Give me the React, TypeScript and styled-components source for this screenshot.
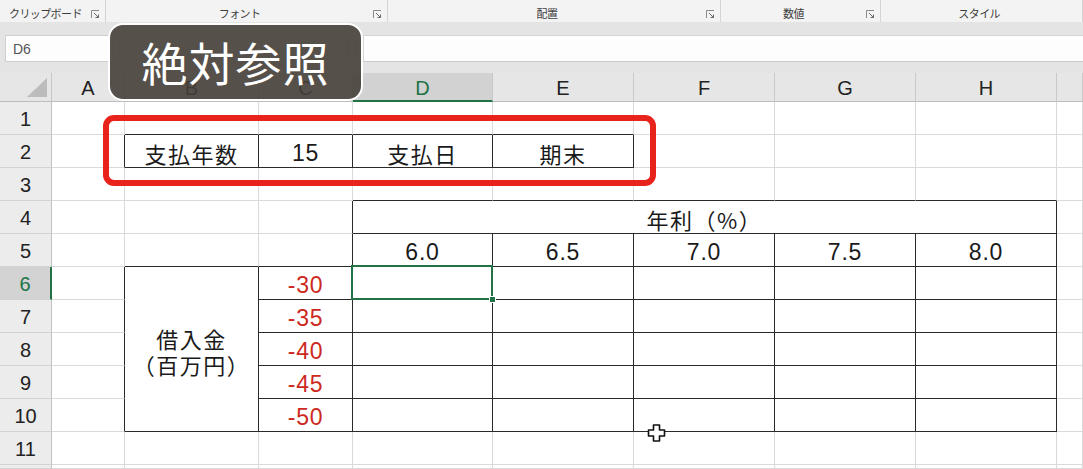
import React from 'react';
import styled, { createGlobalStyle, css } from 'styled-components';

const JP = `"Noto Sans CJK JP", "Noto Sans", sans-serif`;
const NUM = `"Liberation Sans", Arial, sans-serif`;
const GREEN = '#217346';

const GlobalStyle = createGlobalStyle`
  html, body { margin: 0; padding: 0; background: #fff; overflow: hidden; }
  #root { width: 1083px; height: 469px; }
`;

const Screen = styled.div`
  position: relative;
  width: 1083px;
  height: 469px;
  overflow: hidden;
  display: flex;
  flex-direction: column;
  background: #fff;
`;

/* ---------- Ribbon group labels ---------- */
const Ribbon = styled.div`
  display: flex;
  height: 22px;
  flex-shrink: 0;
  background: #f3f3f3;
`;

const Group = styled.div<{ $w?: number }>`
  display: flex;
  align-items: center;
  box-sizing: border-box;
  ${(p) => (p.$w ? `width: ${p.$w}px;` : 'flex: 1;')}
  border-right: 1px solid #d4d4d4;
  padding-right: 5px;
`;

const GroupLabel = styled.span`
  flex: 1;
  text-align: center;
  font-family: ${JP};
  font-size: 11px;
  letter-spacing: -0.6px;
  color: #3c3c3c;
  padding-top: 4px;
`;

const LauncherIcon = styled.svg`
  width: 9px;
  height: 9px;
  margin-top: 6px;
  flex-shrink: 0;
`;

const Launcher = () => (
  <LauncherIcon viewBox="0 0 9 9">
    <path d="M0.5 8V0.5H8" fill="none" stroke="#8a8a8a" strokeWidth="1" />
    <path d="M3 3L7.5 7.5M4.5 7.5H7.5V4.5" fill="none" stroke="#6a6a6a" strokeWidth="1" />
  </LauncherIcon>
);

const Band = styled.div<{ $h: number }>`
  height: ${(p) => p.$h}px;
  flex-shrink: 0;
  background: #e4e4e4;
`;

/* ---------- Formula bar ---------- */
const FormulaRow = styled.div`
  display: flex;
  height: 27px;
  flex-shrink: 0;
  background: #e4e4e4;
`;

const NameBox = styled.div`
  width: 108px;
  margin-left: 5px;
  box-sizing: border-box;
  background: #fdfdfd;
  border: 1px solid #cfcfcf;
  font-family: ${NUM};
  font-size: 14px;
  color: #555;
  display: flex;
  align-items: center;
  padding-left: 7px;
`;

const FxArea = styled.div`
  width: 250px;
  display: flex;
  align-items: center;
  justify-content: flex-end;
  gap: 8px;
  padding-right: 6px;
  box-sizing: border-box;
`;

const FxDivider = styled.span`
  width: 1px;
  height: 18px;
  background: #c4c4c4;
`;

const FormulaInput = styled.div`
  flex: 1;
  background: #fdfdfd;
  border-top: 1px solid #d6d6d6;
  border-bottom: 1px solid #c9c9c9;
  border-left: 1px solid #d6d6d6;
`;

/* ---------- Sheet grid ---------- */
const Sheet = styled.div`
  flex: 1;
  display: grid;
  grid-template-columns: 52px 73px 134px 94px 140px 141px 141px 141px 141px 1fr;
  grid-template-rows: 29px repeat(11, 33px) 1fr;
  background: #fff;
`;

const Corner = styled.div`
  grid-row: 1;
  grid-column: 1;
  background: #e6e6e6;
  border-right: 1px solid #c6c6c6;
  border-bottom: 1px solid #bdbdbd;
  display: flex;
  align-items: flex-end;
  justify-content: flex-end;
  padding: 0 4px 4px 0;
`;

const CornerTri = styled.svg`
  width: 20px;
  height: 19px;
`;

const ColHead = styled.div<{ $c: number; $active?: boolean }>`
  grid-row: 1;
  grid-column: ${(p) => p.$c + 1};
  background: #e6e6e6;
  border-right: 1px solid #c9c9c9;
  border-bottom: 1px solid #bdbdbd;
  display: flex;
  align-items: center;
  justify-content: center;
  font-family: ${NUM};
  font-size: 20px;
  color: #222;
  padding-top: 3px;
  box-sizing: border-box;
  ${(p) =>
    p.$active &&
    css`
      background: #d2d2d2;
      color: ${GREEN};
      border-bottom: 2px solid ${GREEN};
    `}
`;

const RowHead = styled.div<{ $r: number; $active?: boolean }>`
  grid-column: 1;
  grid-row: ${(p) => p.$r + 1};
  background: #ececec;
  border-right: 1px solid #c2c2c2;
  border-bottom: 1px solid #d2d2d2;
  display: flex;
  align-items: center;
  justify-content: center;
  font-family: ${NUM};
  font-size: 20px;
  color: #222;
  padding-top: 2px;
  box-sizing: border-box;
  ${(p) =>
    p.$active &&
    css`
      background: #d3d3d3;
      color: ${GREEN};
      border-right: 2px solid ${GREEN};
    `}
`;

type Kind = 'jp' | 'num' | 'red';

const Cell = styled.div<{
  $r: number;
  $c: number;
  $rs: number;
  $cs: number;
  $darkR: boolean;
  $darkB: boolean;
  $kind?: Kind;
  $selected?: boolean;
}>`
  position: relative;
  grid-row: ${(p) => p.$r + 1} / span ${(p) => p.$rs};
  grid-column: ${(p) => p.$c + 1} / span ${(p) => p.$cs};
  box-sizing: border-box;
  border-right: 1px solid ${(p) => (p.$darkR ? '#2a2a2a' : '#dadada')};
  border-bottom: 1px solid ${(p) => (p.$darkB ? '#2a2a2a' : '#dadada')};
  display: flex;
  flex-direction: column;
  align-items: center;
  justify-content: center;
  padding-top: 3px;
  white-space: pre;
  text-align: center;
  color: #1a1a1a;
  font-family: ${(p) => (p.$kind === 'jp' ? JP : NUM)};
  font-size: ${(p) => (p.$kind === 'jp' ? '22px' : '23px')};
  letter-spacing: ${(p) => (p.$kind === 'jp' ? '1.5px' : '0.8px')};
  line-height: ${(p) => (p.$kind === 'jp' ? '26px' : '24px')};
  ${(p) => p.$kind === 'red' && css`color: #cc2a1e;`}
  ${(p) =>
    p.$selected &&
    css`
      z-index: 2;
      &::before {
        content: '';
        position: absolute;
        left: -2px;
        top: -2px;
        right: -1px;
        bottom: -1px;
        border: 2px solid ${GREEN};
      }
      &::after {
        content: '';
        position: absolute;
        right: -4px;
        bottom: -4px;
        width: 5px;
        height: 5px;
        background: ${GREEN};
        border: 1px solid #fff;
      }
    `}
`;

/* ---------- Overlays ---------- */
const TitleBadge = styled.div`
  position: absolute;
  left: 108px;
  top: 23px;
  width: 255px;
  height: 78px;
  box-sizing: border-box;
  border: 2px solid #fff;
  border-radius: 15px;
  background: rgba(70, 63, 57, 0.9);
  color: #fff;
  font-family: ${JP};
  font-size: 46px;
  letter-spacing: 1px;
  display: flex;
  align-items: center;
  justify-content: center;
  padding-bottom: 2px;
  z-index: 5;
`;

const Highlight = styled.div`
  position: absolute;
  left: 103px;
  top: 115px;
  width: 553px;
  height: 71px;
  box-sizing: border-box;
  border: 6px solid #e8231b;
  border-radius: 11px;
  z-index: 4;
`;

const Pointer = styled.svg`
  position: absolute;
  left: 647px;
  top: 424px;
  width: 19px;
  height: 18px;
  z-index: 6;
`;

/* ---------- Data ---------- */
const COLS = ['A', 'B', 'C', 'D', 'E', 'F', 'G', 'H', ''];
const ROWS = 12;

type Merge = { r: number; c: number; rs: number; cs: number };
const merges: Merge[] = [
  { r: 6, c: 2, rs: 5, cs: 1 },
  { r: 4, c: 4, rs: 1, cs: 5 },
];

const regions = [
  { r1: 2, r2: 2, c1: 2, c2: 5 },
  { r1: 4, r2: 5, c1: 4, c2: 8 },
  { r1: 6, r2: 10, c1: 2, c2: 8 },
];

const inRegion = (r: number, c: number) =>
  regions.some((g) => r >= g.r1 && r <= g.r2 && c >= g.c1 && c <= g.c2);

const values: Record<string, { text: string; kind: Kind }> = {
  '2,2': { text: '支払年数', kind: 'jp' },
  '2,3': { text: '15', kind: 'num' },
  '2,4': { text: '支払日', kind: 'jp' },
  '2,5': { text: '期末', kind: 'jp' },
  '4,4': { text: '年利（%）', kind: 'jp' },
  '5,4': { text: '6.0', kind: 'num' },
  '5,5': { text: '6.5', kind: 'num' },
  '5,6': { text: '7.0', kind: 'num' },
  '5,7': { text: '7.5', kind: 'num' },
  '5,8': { text: '8.0', kind: 'num' },
  '6,2': { text: '借入金\n（百万円）', kind: 'jp' },
  '6,3': { text: '-30', kind: 'red' },
  '7,3': { text: '-35', kind: 'red' },
  '8,3': { text: '-40', kind: 'red' },
  '9,3': { text: '-45', kind: 'red' },
  '10,3': { text: '-50', kind: 'red' },
};

const covered = (r: number, c: number) =>
  merges.some(
    (m) =>
      r >= m.r && r < m.r + m.rs && c >= m.c && c < m.c + m.cs && !(r === m.r && c === m.c)
  );

const buildCells = () => {
  const out: React.ReactNode[] = [];
  for (let r = 1; r <= ROWS; r++) {
    for (let c = 1; c <= COLS.length; c++) {
      if (covered(r, c)) continue;
      const m = merges.find((x) => x.r === r && x.c === c);
      const rs = m ? m.rs : 1;
      const cs = m ? m.cs : 1;
      const lastC = c + cs - 1;
      const lastR = r + rs - 1;
      const darkR = inRegion(r, lastC) || inRegion(r, lastC + 1);
      const darkB = inRegion(lastR, c) || inRegion(lastR + 1, c);
      const v = values[`${r},${c}`];
      out.push(
        <Cell
          key={`${r}-${c}`}
          $r={r}
          $c={c}
          $rs={rs}
          $cs={cs}
          $darkR={darkR}
          $darkB={darkB}
          $kind={v?.kind}
          $selected={r === 6 && c === 4}
        >
          {v?.text}
        </Cell>
      );
    }
  }
  return out;
};

const groups: { label: string; w?: number; launcher: boolean }[] = [
  { label: 'クリップボード', w: 106, launcher: true },
  { label: 'フォント', w: 283, launcher: true },
  { label: '配置', w: 333, launcher: true },
  { label: '数値', w: 161, launcher: true },
  { label: 'スタイル', w: 202, launcher: false },
];

export default function App() {
  return (
    <>
      <GlobalStyle />
      <Screen>
        <Ribbon>
          {groups.map((g) => (
            <Group key={g.label} $w={g.w}>
              <GroupLabel>{g.label}</GroupLabel>
              {g.launcher && <Launcher />}
            </Group>
          ))}
        </Ribbon>
        <Band $h={13} />
        <FormulaRow>
          <NameBox>D6</NameBox>
          <FxArea>
            <FxDivider />
            <FxDivider />
          </FxArea>
          <FormulaInput />
        </FormulaRow>
        <Band $h={11} />
        <Sheet>
          <Corner>
            <CornerTri viewBox="0 0 20 19">
              <polygon points="20,0 20,19 0,19" fill="#bcbcbc" />
            </CornerTri>
          </Corner>
          {COLS.map((l, i) => (
            <ColHead key={`h${i}`} $c={i + 1} $active={l === 'D'}>
              {l}
            </ColHead>
          ))}
          {Array.from({ length: ROWS }, (_, i) => (
            <RowHead key={`r${i}`} $r={i + 1} $active={i + 1 === 6}>
              {i + 1 < ROWS ? i + 1 : ''}
            </RowHead>
          ))}
          {buildCells()}
        </Sheet>

        <TitleBadge>絶対参照</TitleBadge>
        <Highlight />
        <Pointer viewBox="0 0 19 18">
          <path
            d="M6.5 1H12.5V6H17.5V12H12.5V17H6.5V12H1.5V6H6.5Z"
            fill="#fff"
            stroke="#111"
            strokeWidth="1.6"
            strokeLinejoin="round"
          />
        </Pointer>
      </Screen>
    </>
  );
}
